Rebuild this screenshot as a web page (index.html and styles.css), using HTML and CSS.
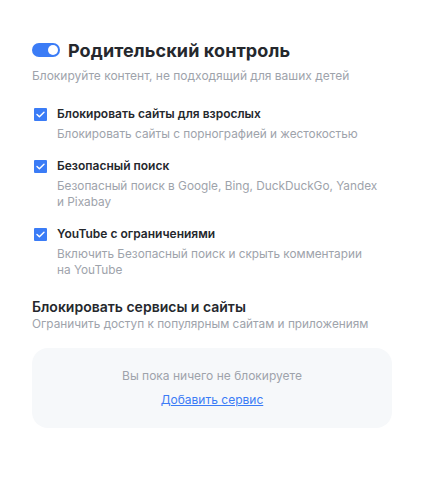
FILE: index.html
```html
<!DOCTYPE html>
<html lang="ru">
<head>
    <meta charset="UTF-8">
    <meta name="viewport" content="width=device-width, initial-scale=1.0">
    <title>Родительский контроль</title>
    <link rel="stylesheet" href="styles.css">
</head>
<body>
    <div class="panel">
        <!-- Header -->
        <div class="header">
            <span class="toggle"><span class="knob"></span></span>
            <h1>Родительский контроль</h1>
        </div>
        <p class="subtitle">Блокируйте контент, не подходящий для ваших детей</p>

        <!-- Options -->
        <div class="options">
            <div class="option">
                <span class="checkbox">
                    <svg width="9" height="7" viewBox="0 0 9 7"><path d="M1 3.5 L3.4 5.8 L8 1.2" fill="none" stroke="#fff" stroke-width="1.4" stroke-linecap="round" stroke-linejoin="round"/></svg>
                </span>
                <div class="option-text">
                    <div class="option-title">Блокировать сайты для взрослых</div>
                    <div class="option-desc">Блокировать сайты с порнографией и жестокостью</div>
                </div>
            </div>
            <div class="option">
                <span class="checkbox">
                    <svg width="9" height="7" viewBox="0 0 9 7"><path d="M1 3.5 L3.4 5.8 L8 1.2" fill="none" stroke="#fff" stroke-width="1.4" stroke-linecap="round" stroke-linejoin="round"/></svg>
                </span>
                <div class="option-text">
                    <div class="option-title">Безопасный поиск</div>
                    <div class="option-desc">Безопасный поиск в Google, Bing, DuckDuckGo, Yandex<br>и Pixabay</div>
                </div>
            </div>
            <div class="option">
                <span class="checkbox">
                    <svg width="9" height="7" viewBox="0 0 9 7"><path d="M1 3.5 L3.4 5.8 L8 1.2" fill="none" stroke="#fff" stroke-width="1.4" stroke-linecap="round" stroke-linejoin="round"/></svg>
                </span>
                <div class="option-text">
                    <div class="option-title">YouTube с ограничениями</div>
                    <div class="option-desc">Включить Безопасный поиск и скрыть комментарии<br>на YouTube</div>
                </div>
            </div>
        </div>

        <!-- Blocked services -->
        <h2>Блокировать сервисы и сайты</h2>
        <p class="section-desc">Ограничить доступ к популярным сайтам и приложениям</p>
        <div class="empty-box">
            <p>Вы пока ничего не блокируете</p>
            <a href="#" class="add-link">Добавить сервис</a>
        </div>
    </div>
</body>
</html>
```

FILE: styles.css
```css
* {
    margin: 0;
    padding: 0;
    box-sizing: border-box;
}

body {
    font-family: 'Inter', 'Noto Sans', sans-serif;
    background-color: #ffffff;
    color: #25282d;
}

.panel {
    width: 392px;
    padding: 40px 0 0 32px;
}

/* Header */
.header {
    display: flex;
    align-items: center;
    gap: 8px;
    height: 20px;
}

.toggle {
    width: 28px;
    height: 14px;
    border-radius: 7px;
    background-color: #3b7cf6;
    display: flex;
    justify-content: flex-end;
    align-items: center;
    padding: 2px;
}

.knob {
    width: 10px;
    height: 10px;
    border-radius: 50%;
    background-color: #ffffff;
}

h1 {
    font-size: 18px;
    font-weight: 700;
    letter-spacing: 0.1px;
}

.subtitle {
    margin-top: 8px;
    font-size: 12px;
    line-height: 16px;
    color: #9ea3ab;
}

/* Options */
.options {
    margin-top: 22px;
    display: flex;
    flex-direction: column;
    gap: 16px;
}

.option {
    display: flex;
    gap: 10px;
}

.checkbox {
    flex: none;
    width: 13px;
    height: 13px;
    margin: 2px 0 0 2px;
    border-radius: 1px;
    background-color: #3b7cf6;
    display: flex;
    justify-content: center;
    align-items: center;
}

.option-title {
    font-size: 12px;
    font-weight: 600;
    line-height: 16px;
}

.option-desc {
    margin-top: 4px;
    font-size: 11.8px;
    line-height: 16px;
    color: #9ea3ab;
}

/* Blocked services */
h2 {
    margin-top: 20px;
    font-size: 14px;
    font-weight: 600;
    line-height: 18px;
}

.section-desc {
    font-size: 11.8px;
    line-height: 16px;
    color: #9ea3ab;
}

.empty-box {
    margin-top: 16px;
    height: 80px;
    border-radius: 16px;
    background-color: #f6f8fa;
    display: flex;
    flex-direction: column;
    align-items: center;
    justify-content: center;
    gap: 8px;
}

.empty-box p {
    font-size: 12px;
    line-height: 16px;
    color: #9ea3ab;
}

.add-link {
    font-size: 12px;
    line-height: 16px;
    color: #3b7cf6;
}
```
